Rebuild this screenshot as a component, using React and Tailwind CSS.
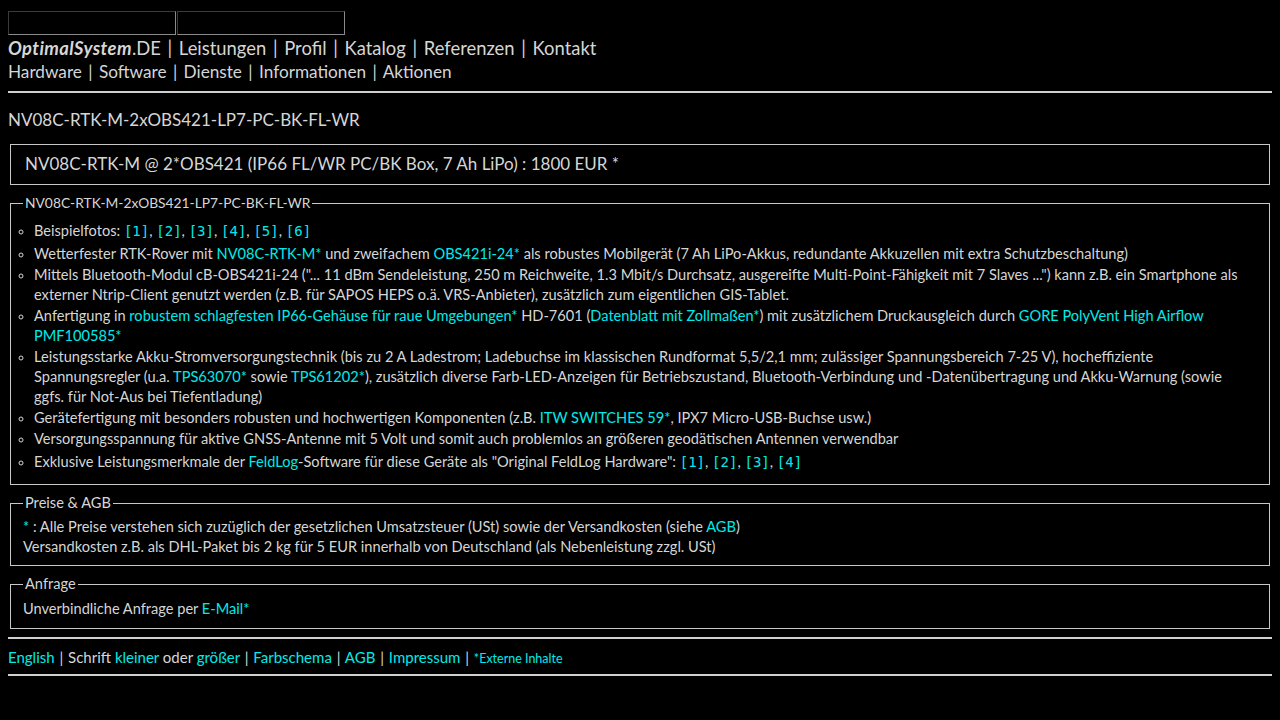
import React from "react";

const L = ({ children }) => <span className="text-[#00eaea]">{children}</span>;
const B = ({ n }) => <span className="text-[#00eaea] font-['DejaVu_Sans_Mono',monospace] text-[14px]">[{n}]</span>;
const P = ({ m = "mx-[2px]" }) => <span className={m}>|</span>;

export default function App() {
  const fotos = [1, 2, 3, 4, 5, 6];
  const feld = [1, 2, 3, 4];
  return (
    <div className="min-h-[720px] bg-black p-2 text-[#d6d6d6] font-['Lato',sans-serif] text-[14.6px] leading-[20px]">
      {/* Bild-Platzhalter */}
      <div className="flex pt-[3px]">
        <div className="w-[168px] h-[24px] border border-t-[#3a3a3a] border-l-[#3a3a3a] border-r-[#8a8a8a] border-b-[#8a8a8a]" />
        <div className="ml-px w-[168px] h-[24px] border border-t-[#3a3a3a] border-l-[#3a3a3a] border-r-[#8a8a8a] border-b-[#8a8a8a]" />
      </div>

      <div className="leading-[23px] pt-[2px]">
        <div className="text-[18.4px]">
          <b className="tracking-[0.4px]"><i>OptimalSystem</i></b>.DE <P /> Leistungen <P /> Profil <P /> Katalog <P /> Referenzen <P /> Kontakt
        </div>
        <div className="text-[17.2px]">
          Hardware <P /> Software <P /> Dienste <P /> Informationen <P /> Aktionen
        </div>
      </div>

      <hr className="mt-[8px] border-0 h-[2px] bg-[#cfcfcf]" />

      <div className="mt-[15px] text-[17px] leading-[23px]">NV08C-RTK-M-2xOBS421-LP7-PC-BK-FL-WR</div>

      <div className="mt-[13px] mx-[2px] border border-[#c8c8c8] h-[41px] flex items-center px-[14px] pb-[1px] text-[17px]">
        NV08C-RTK-M @ 2*OBS421 (IP66 FL/WR PC/BK Box, 7 Ah LiPo) : 1800 EUR *
      </div>

      <fieldset className="mt-[8px] mx-[2px] border border-[#c8c8c8] px-[12px] pb-[10px]">
        <legend className="px-[2px] text-[13.8px]">NV08C-RTK-M-2xOBS421-LP7-PC-BK-FL-WR</legend>
        <ul className="mt-[6px] list-[circle] pl-[11px] pr-[6px] flex flex-col gap-[1px] marker:text-[12px]">
          <li className="leading-[23px]">
            Beispielfotos:{" "}
            {fotos.map((n, i) => (
              <React.Fragment key={n}>
                <B n={n} />
                {i < fotos.length - 1 ? ", " : ""}
              </React.Fragment>
            ))}
          </li>
          <li>
            Wetterfester RTK-Rover mit <L>NV08C-RTK-M*</L> und zweifachem <L>OBS421i-24*</L> als robustes Mobilgerät (7 Ah LiPo-Akkus, redundante Akkuzellen mit extra Schutzbeschaltung)
          </li>
          <li>
            Mittels Bluetooth-Modul cB-OBS421i-24 ("... 11 dBm Sendeleistung, 250 m Reichweite, 1.3 Mbit/s Durchsatz, ausgereifte Multi-Point-Fähigkeit mit 7 Slaves ...") kann z.B. ein Smartphone als externer Ntrip-Client genutzt werden (z.B. für SAPOS HEPS o.ä. VRS-Anbieter), zusätzlich zum eigentlichen GIS-Tablet.
          </li>
          <li>
            Anfertigung in <L>robustem schlagfesten IP66-Gehäuse für raue Umgebungen*</L> HD-7601 (<L>Datenblatt mit Zollmaßen*</L>) mit zusätzlichem Druckausgleich durch <L>GORE PolyVent High Airflow PMF100585*</L>
          </li>
          <li>
            Leistungsstarke Akku-Stromversorgungstechnik (bis zu 2 A Ladestrom; Ladebuchse im klassischen Rundformat 5,5/2,1 mm; zulässiger Spannungsbereich 7-25 V), hocheffiziente Spannungsregler (u.a. <L>TPS63070*</L> sowie <L>TPS61202*</L>), zusätzlich diverse Farb-LED-Anzeigen für Betriebszustand, Bluetooth-Verbindung und -Datenübertragung und Akku-Warnung (sowie ggfs. für Not-Aus bei Tiefentladung)
          </li>
          <li>
            Gerätefertigung mit besonders robusten und hochwertigen Komponenten (z.B. <L>ITW SWITCHES 59*</L>, IPX7 Micro-USB-Buchse usw.)
          </li>
          <li>Versorgungsspannung für aktive GNSS-Antenne mit 5 Volt und somit auch problemlos an größeren geodätischen Antennen verwendbar</li>
          <li className="leading-[23px]">
            Exklusive Leistungsmerkmale der <L>FeldLog</L>-Software für diese Geräte als "Original FeldLog Hardware":{" "}
            {feld.map((n, i) => (
              <React.Fragment key={n}>
                <B n={n} />
                {i < feld.length - 1 ? ", " : ""}
              </React.Fragment>
            ))}
          </li>
        </ul>
      </fieldset>

      <fieldset className="mt-[8px] mx-[2px] border border-[#c8c8c8] px-[12px] pb-[8px]">
        <legend className="px-[2px]">Preise &amp; AGB</legend>
        <div className="mt-[4px]">
          <L>*</L> : Alle Preise verstehen sich zuzüglich der gesetzlichen Umsatzsteuer (USt) sowie der Versandkosten (siehe <L>AGB</L>)
        </div>
        <div>Versandkosten z.B. als DHL-Paket bis 2 kg für 5 EUR innerhalb von Deutschland (als Nebenleistung zzgl. USt)</div>
      </fieldset>

      <fieldset className="mt-[8px] mx-[2px] border border-[#c8c8c8] px-[12px] pb-[9px]">
        <legend className="px-[2px]">Anfrage</legend>
        <div className="mt-[5px]">
          Unverbindliche Anfrage per <L>E-Mail*</L>
        </div>
      </fieldset>

      <hr className="mt-[8px] border-0 h-[2px] bg-[#cfcfcf]" />
      <div className="mt-[8px] leading-[21px] text-[15px]">
        <L>English</L> <P m="mx-px" /> Schrift <L>kleiner</L> oder <L>größer</L> <P m="mx-px" /> <L>Farbschema</L> <P m="mx-px" /> <L>AGB</L> <P m="mx-px" /> <L>Impressum</L> <P m="mx-px" />{" "}
        <span className="text-[#00eaea] text-[12.5px]">*Externe Inhalte</span>
      </div>
      <hr className="mt-[5px] border-0 h-[2px] bg-[#cfcfcf]" />
    </div>
  );
}
